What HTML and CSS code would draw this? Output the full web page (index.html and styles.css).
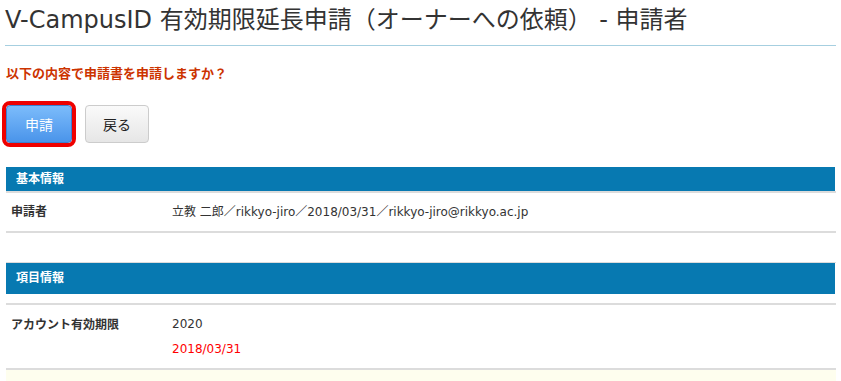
FILE: index.html
```html
<!DOCTYPE html>
<html lang="ja">

<head>
  <meta charset="UTF-8">
  <meta name="viewport" content="width=device-width, initial-scale=1.0">
  <title>V-CampusID 有効期限延長申請</title>
  <link rel="stylesheet" href="styles.css">
</head>

<body>
  <div class="page">
    <h1 class="page-title">V-CampusID 有効期限延長申請（オーナーへの依頼） - 申請者</h1>

    <p class="confirm">以下の内容で申請書を申請しますか？</p>

    <div class="actions">
      <button class="btn btn-primary">申請</button>
      <button class="btn btn-default">戻る</button>
    </div>

    <div class="section section-basic">
      <div class="section-head">基本情報</div>
      <table class="info">
        <tr>
          <th>申請者</th>
          <td>立教 二郎／rikkyo-jiro／2018/03/31／rikkyo-jiro@rikkyo.ac.jp</td>
        </tr>
      </table>
    </div>

    <div class="section section-item">
      <div class="section-head">項目情報</div>
      <table class="info">
        <tr>
          <th>アカウント有効期限</th>
          <td>2020<br><span class="warn">2018/03/31</span></td>
        </tr>
      </table>
      <div class="note"></div>
    </div>
  </div>
</body>

</html>
```

FILE: styles.css
```css
* {
  box-sizing: border-box;
}

body {
  margin: 0;
  font-family: "DejaVu Sans", "Noto Sans CJK JP", sans-serif;
  color: #333;
  background: #fff;
}

.page {
  padding: 0 5px 0 6px;
}

.page-title {
  margin: 0 0 0 -1px;
  padding: 4px 0 0;
  height: 46px;
  line-height: 32px;
  font-size: 24px;
  font-weight: normal;
  color: #333;
  border-bottom: 1px solid #a6cfe0;
}

.confirm {
  margin: 0;
  padding-top: 19px;
  height: 59px;
  line-height: 18px;
  font-size: 13px;
  font-weight: bold;
  color: #cc3300;
}

.actions {
  display: flex;
  gap: 13px;
}

.btn {
  height: 38px;
  border-radius: 4px;
  font-family: inherit;
  font-size: 14px;
  cursor: pointer;
}

.btn-primary {
  width: 66px;
  color: #fff;
  border: 1px solid #3a7fd0;
  background: linear-gradient(#7cbcfb, #4a94ea);
  outline: 4px solid #ee0000;
  outline-offset: 0;
}

.btn-default {
  width: 64px;
  color: #222;
  border: 1px solid #ccc;
  background: linear-gradient(#fafafa, #e6e6e6);
}

.section-basic {
  margin-top: 24px;
}

.section-item {
  margin-top: 29px;
  border-top: 1px solid #dcdcdc;
}

.section-head {
  height: 24px;
  line-height: 24px;
  margin-right: 1px;
  padding-left: 10px;
  font-size: 12px;
  font-weight: bold;
  color: #fff;
  background: #0779b1;
}

.section-item .section-head {
  height: 31px;
  line-height: 31px;
  margin-bottom: 9px;
}

.info {
  width: 100%;
  border-collapse: collapse;
  border-top: 2px solid #dcdcdc;
  border-bottom: 2px solid #dcdcdc;
  font-size: 12px;
}

.info th,
.info td {
  text-align: left;
  vertical-align: top;
  padding: 10px 0;
  line-height: 18px;
}

.info th {
  width: 166px;
  padding-left: 5px;
  font-weight: bold;
}

.section-item .info th,
.section-item .info td {
  padding-top: 7px;
  padding-bottom: 6px;
  line-height: 25px;
}

.section-item .info th {
  line-height: 26px;
}

.warn {
  color: #ff0000;
}

.note {
  height: 20px;
  background: #fefeee;
}
```
